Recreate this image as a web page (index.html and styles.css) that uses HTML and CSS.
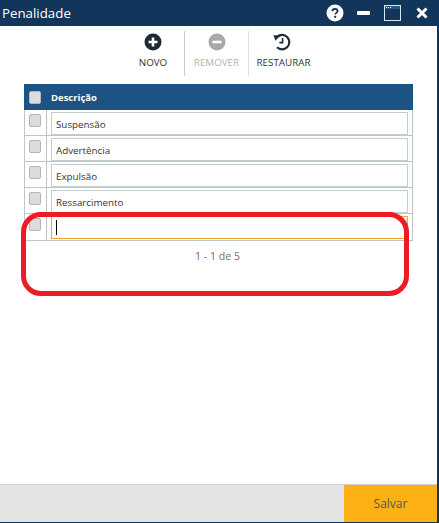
FILE: index.html
```html
<!DOCTYPE html>
<html lang="pt">
<head>
    <meta charset="UTF-8">
    <meta name="viewport" content="width=device-width, initial-scale=1.0">
    <title>Penalidade</title>
    <link rel="stylesheet" href="styles.css">
</head>
<body>
    <div class="window">
        <!-- title bar -->
        <div class="title-bar">
            <span class="title">Penalidade</span>
            <div class="window-icons">
                <svg class="icon-help" width="18" height="18" viewBox="0 0 18 18">
                    <circle cx="9" cy="9" r="8.5" fill="#fff"/>
                    <path d="M6.4 7.2C6.4 5.6 7.6 4.8 9 4.8S11.6 5.6 11.6 7c0 1.8-2.4 1.9-2.4 3.6" fill="none" stroke="#12355b" stroke-width="1.8"/>
                    <rect x="8.2" y="11.8" width="2" height="2" fill="#12355b"/>
                </svg>
                <span class="icon-min"></span>
                <svg class="icon-max" width="17" height="16" viewBox="0 0 17 16">
                    <rect x="0.5" y="0.5" width="16" height="15" fill="#12355b" stroke="#d9e6f2"/>
                    <rect x="1" y="1" width="15" height="3" fill="#2b5680"/>
                    <path d="M2 2.5h1M4 2.5h1M6 2.5h1" stroke="#fff"/>
                </svg>
                <svg class="icon-close" width="12" height="12" viewBox="0 0 12 12">
                    <path d="M1.5 1.5l9 9M10.5 1.5l-9 9" stroke="#fff" stroke-width="3"/>
                </svg>
            </div>
        </div>

        <!-- toolbar -->
        <div class="toolbar">
            <div class="tool tool-novo">
                <svg width="18" height="18" viewBox="0 0 18 18">
                    <circle cx="9" cy="9" r="8.5" fill="#1f2a36"/>
                    <path d="M9 4.5v9M4.5 9h9" stroke="#fff" stroke-width="2.6"/>
                </svg>
                <span>NOVO</span>
            </div>
            <div class="tool tool-remover">
                <svg width="18" height="18" viewBox="0 0 18 18">
                    <circle cx="9" cy="9" r="8.5" fill="#a9a9a9"/>
                    <path d="M4.5 9h9" stroke="#fff" stroke-width="2.6"/>
                </svg>
                <span>REMOVER</span>
            </div>
            <div class="tool tool-restaurar">
                <svg class="icon-restore" width="18" height="18" viewBox="0 0 18 18">
                    <path d="M4.2 3.9A7.2 7.2 0 1 1 4 14.2" fill="none" stroke="#1f2a36" stroke-width="2.2"/>
                    <path d="M0.4 2.2l6.6 0.2L2.6 7.8z" fill="#1f2a36"/>
                    <path d="M9.6 5v4.6H6.4" fill="none" stroke="#1f2a36" stroke-width="1.6"/>
                </svg>
                <span>RESTAURAR</span>
            </div>
        </div>

        <!-- list -->
        <div class="content">
            <div class="grid">
                <div class="grid-head">
                    <div class="col-check"><span class="check"></span></div>
                    <div class="col-desc">Descrição</div>
                </div>
                <div class="grid-row">
                    <div class="col-check"><span class="check"></span></div>
                    <div class="col-input"><input class="field" type="text" value="Suspensão"></div>
                </div>
                <div class="grid-row">
                    <div class="col-check"><span class="check"></span></div>
                    <div class="col-input"><input class="field" type="text" value="Advertência"></div>
                </div>
                <div class="grid-row">
                    <div class="col-check"><span class="check"></span></div>
                    <div class="col-input"><input class="field" type="text" value="Expulsão"></div>
                </div>
                <div class="grid-row">
                    <div class="col-check"><span class="check"></span></div>
                    <div class="col-input"><input class="field" type="text" value="Ressarcimento"></div>
                </div>
                <div class="grid-row">
                    <div class="col-check"><span class="check"></span></div>
                    <div class="col-input">
                        <div class="field field-active"><span class="caret"></span></div>
                    </div>
                </div>
            </div>
            <div class="pager">1 - 1 de 5</div>
            <!-- red annotation drawn over the screenshot -->
            <div class="highlight"></div>
        </div>

        <!-- bottom bar -->
        <div class="bottom-bar">
            <button class="save" type="button">Salvar</button>
        </div>
    </div>
</body>
</html>
```

FILE: styles.css
```css
html, body {
    margin: 0;
    padding: 0;
    height: 100%;
    background-color: #fff;
    font-family: "Open Sans", Arial, sans-serif;
}

.window {
    box-sizing: border-box;
    width: 439px;
    height: 523px;
    display: flex;
    flex-direction: column;
    border-right: 2px solid #12355b;
    border-bottom: 1px solid #12355b;
}

/* title bar */
.title-bar {
    height: 26px;
    flex: none;
    display: flex;
    align-items: center;
    justify-content: space-between;
    background-color: #12355b;
    color: #fff;
    padding-left: 2px;
    margin-right: -2px;
}

.title {
    font-size: 13.3px;
}

.window-icons {
    display: flex;
    align-items: center;
    padding-right: 11px;
}

.icon-min {
    width: 13px;
    height: 4px;
    margin-left: 13px;
    background-color: #fff;
    border-radius: 1px;
}

.icon-max {
    margin-left: 14px;
}

.icon-close {
    margin-left: 15px;
}

/* toolbar */
.toolbar {
    height: 45px;
    margin-top: 5px;
    flex: none;
    display: flex;
    padding-left: 122px;
}

.tool {
    display: flex;
    flex-direction: column;
    align-items: center;
    font-size: 9.8px;
    color: #333;
    box-sizing: border-box;
    padding-top: 2px;
}

.tool span {
    margin-top: 5px;
}

.tool-novo {
    width: 63px;
    border-right: 1px solid #ccc;
}

.tool-remover {
    width: 64px;
    border-right: 1px solid #e0e0e0;
    color: #b5b5b5;
}

.tool-restaurar {
    width: 69px;
}

.icon-restore {
    margin-right: 3px;
}

/* grid */
.content {
    position: relative;
    flex: 1;
    padding: 8px 24px 0;
}

.grid {
    width: 389px;
    border-bottom: 1px solid #b8c8cc;
    box-sizing: border-box;
}

.grid-head {
    height: 26px;
    display: flex;
    align-items: center;
    background-color: #1d5285;
    color: #fff;
    font-size: 9.5px;
    font-weight: 700;
}

.grid-row {
    height: 26px;
    display: flex;
    box-sizing: border-box;
    border-bottom: 1px solid #b8c8cc;
    border-left: 1px solid #b8c8cc;
    border-right: 1px solid #b8c8cc;
}

.grid-row:last-child {
    border-bottom: none;
}

.col-check {
    width: 22px;
    flex: none;
    display: flex;
    justify-content: center;
    align-items: flex-start;
    padding: 4px 2px 0 0;
    box-sizing: border-box;
}

.grid-head .col-check {
    padding: 0 1px 0 0;
    width: 23px;
    align-items: center;
}

.grid-row .col-check {
    border-right: 1px solid #b8c8cc;
}

.col-desc {
    padding-left: 4px;
}

.col-input {
    flex: 1;
    padding: 2px 4px 0 4px;
}

.check {
    width: 10px;
    height: 11px;
    background-color: #dcdcdc;
    border: 1px solid #b5b5b5;
    border-radius: 2px;
}

.field {
    display: block;
    box-sizing: border-box;
    width: 100%;
    height: 23px;
    margin: 0;
    padding: 2px 4px 0;
    border: 1px solid #c6cbcb;
    outline: none;
    background-color: #fff;
    font-family: "Open Sans", Arial, sans-serif;
    font-size: 9.8px;
    color: #333;
}

.field-active {
    border-color: #f4a62a;
    padding-top: 3px;
}

.caret {
    display: block;
    width: 1px;
    height: 15px;
    background-color: #000;
}

.pager {
    margin-top: 8px;
    width: 389px;
    padding-right: 2px;
    box-sizing: border-box;
    text-align: center;
    font-size: 10.6px;
    color: #7a6a72;
}

.highlight {
    position: absolute;
    left: 21px;
    top: 136px;
    width: 378px;
    height: 74px;
    border: 5px solid #ed1c24;
    border-radius: 20px;
}

/* bottom bar */
.bottom-bar {
    height: 38px;
    flex: none;
    display: flex;
    justify-content: flex-end;
    box-sizing: border-box;
    background-color: #e4e4e4;
    border-top: 1px solid #d2d2d2;
}

.save {
    width: 93px;
    border: none;
    padding: 0;
    background-color: #fdb014;
    color: #555;
    font-family: "Open Sans", Arial, sans-serif;
    font-size: 12px;
}
```
